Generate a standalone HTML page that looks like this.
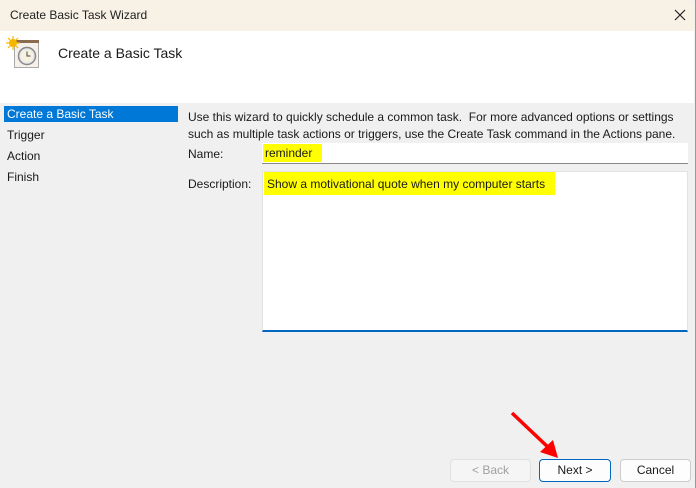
<!DOCTYPE html>
<html><head><meta charset="utf-8"><style>
*{margin:0;padding:0;box-sizing:border-box}
body{width:696px;height:488px;overflow:hidden;background:#f0f0f0;font-family:"Segoe UI","Liberation Sans",sans-serif;font-size:12px;color:#1a1a1a;position:relative}
.abs{position:absolute}
.title{left:0;top:0;width:696px;height:31px;background:#f7f1e6;border-radius:0 8px 0 0}
.title span{position:absolute;left:10px;top:8px;font-size:12px;color:#222}
.hdr{left:0;top:31px;width:694px;height:72px;background:#fff}
.nav div{position:absolute;left:4px;width:174px;height:16px;padding-left:3px;line-height:16px;font-size:12px}
.btn{height:23px;border:1px solid #ccc;border-radius:4px;background:#fdfdfd;text-align:center;line-height:21px;font-size:12px}
</style></head><body>
<div class="abs title"><span>Create Basic Task Wizard</span>
<svg class="abs" style="left:674px;top:9px" width="12" height="12"><path d="M1 1L11 11M11 1L1 11" stroke="#222" stroke-width="1.2"/></svg></div>
<div class="abs" style="left:695px;top:0;width:1px;height:488px;background:#999"></div>
<div class="abs hdr"></div>
<svg class="abs" style="left:6px;top:35px" width="34" height="34">
<rect x="8.5" y="5.5" width="24" height="27" fill="#f5f1ea" stroke="#aaa"/>
<rect x="8" y="5" width="25" height="3" fill="#8a6a50"/>
<circle cx="21" cy="21" r="8.5" fill="#e8e8e8" stroke="#888" stroke-width="1.5"/>
<circle cx="21" cy="21" r="6" fill="#f7f2e0"/>
<path d="M21 16.5V21H24.5" stroke="#444" fill="none"/>
<path d="M7 1V15M0 8H14M2 3L12 13M12 3L2 13" stroke="#f6b600" stroke-width="1.2"/>
<circle cx="7" cy="8" r="4" fill="#f6b600"/>
</svg>
<div class="abs" style="left:58px;top:45px;font-size:14px;color:#1a1a1a">Create a Basic Task</div>
<div class="nav">
<div style="top:106px;background:#0078d7;color:#fff">Create a Basic Task</div>
<div style="top:127px">Trigger</div>
<div style="top:148px">Action</div>
<div style="top:169px">Finish</div>
</div>
<div class="abs" style="left:188px;top:109px;line-height:17px;width:505px">Use this wizard to quickly schedule a common task.&nbsp; For more advanced options or settings such as multiple task actions or triggers, use the Create Task command in the Actions pane.</div>
<div class="abs" style="left:188px;top:147px">Name:</div>
<div class="abs" style="left:262px;top:143px;width:426px;height:21px;background:#fff;border-bottom:1px solid #888"></div>
<div class="abs" style="left:263px;top:144px;width:59px;height:18px;background:#ffff00;padding-left:2px;line-height:19px">reminder</div>
<div class="abs" style="left:188px;top:177px">Description:</div>
<div class="abs" style="left:262px;top:171px;width:426px;height:161px;background:#fff;border:1px solid #e3e3e3;border-bottom:2px solid #0067c0"></div>
<div class="abs" style="left:264px;top:172px;width:291px;height:23px;background:#ffff00;padding-left:3px;line-height:24px">Show a motivational quote when my computer starts</div>
<svg class="abs" style="left:505px;top:408px" width="60" height="50"><path d="M7 5L46 42" stroke="#f00" stroke-width="3.5"/><path d="M53 50L35 44L48 32Z" fill="#f00"/></svg>
<div class="abs btn" style="left:450px;top:459px;width:81px;color:#a0a0a0;border-color:#e0e0e0;background:#f5f5f5">&lt; Back</div>
<div class="abs btn" style="left:539px;top:459px;width:72px;border-color:#0067c0">Next &gt;</div>
<div class="abs btn" style="left:620px;top:459px;width:71px">Cancel</div>
</body></html>
